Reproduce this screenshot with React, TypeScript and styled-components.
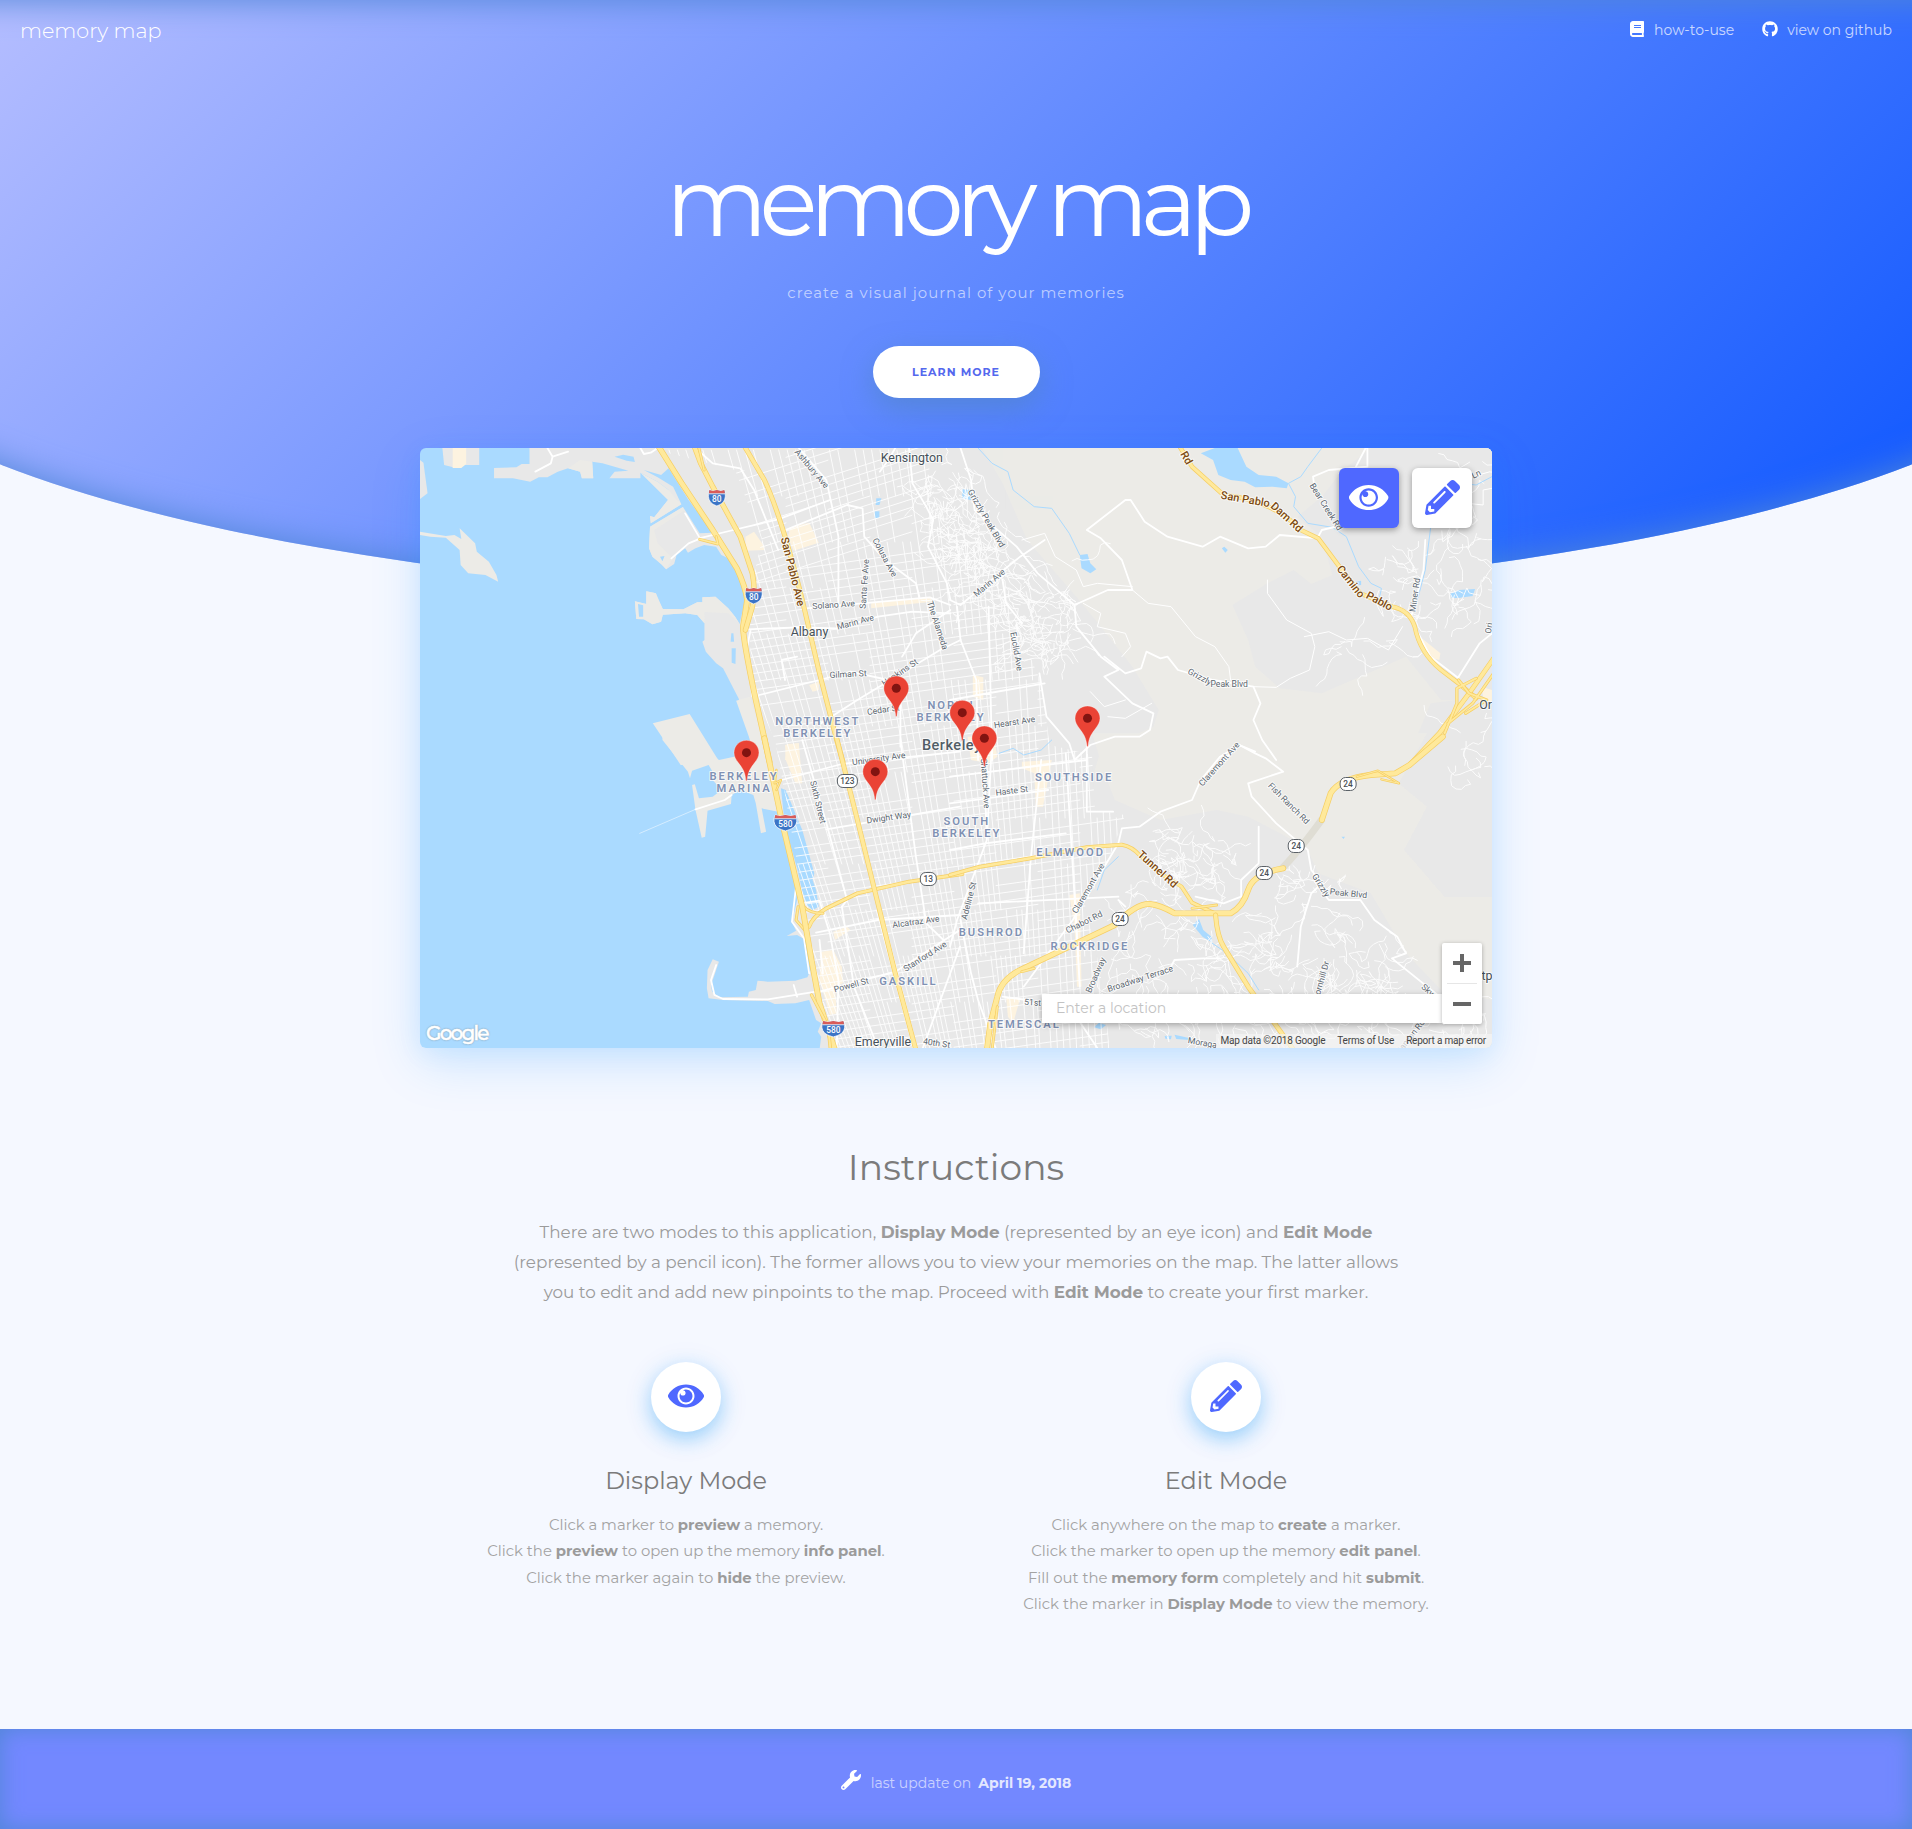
import React from "react";
import styled, { createGlobalStyle, css } from "styled-components";
import { FaBook, FaGithub, FaPencilAlt, FaWrench } from "react-icons/fa";

const GlobalStyle = createGlobalStyle`
  *, *::before, *::after { box-sizing: border-box; }
  body {
    margin: 0;
    background: #f5f8ff;
    font-family: "Montserrat", Inter, "Open Sans", sans-serif;
    font-weight: 400;
  }
  h1, h2, h3, p { margin: 0; font-weight: 400; }
  a { color: inherit; text-decoration: none; }
`;

/* ---------- layout ---------- */

const Page = styled.div`
  position: relative;
  display: flex;
  flex-direction: column;
  min-height: 1829px;
  overflow: hidden;
`;

const HeroBackdrop = styled.div`
  position: absolute;
  top: 0;
  left: -10%;
  width: 120%;
  height: 598px;
  border-radius: 0 0 50% 50%;
  background: linear-gradient(135deg, #c1c5ff, #004eff);
  box-shadow: inset 0 0 34px rgb(80, 134, 215);
`;

const Nav = styled.nav`
  position: relative;
  display: flex;
  justify-content: space-between;
  align-items: flex-start;
  height: 60px;
  padding: 18px 20px 0;
  color: #fff;
`;

const Brand = styled.a`
  font-size: 20.7px;
  font-weight: 300;
  line-height: 26px;
`;

const NavLinks = styled.div`
  display: flex;
  gap: 28px;
  padding-top: 2px;
`;

const NavLink = styled.a`
  display: flex;
  gap: 9px;
  font-size: 14px;
  line-height: 20px;
  svg { margin-top: 1px; font-size: 16px; }
  span { opacity: 0.72; }
`;

const Hero = styled.header`
  position: relative;
  display: flex;
  flex-direction: column;
  align-items: center;
  height: 388px;
  padding-top: 92px;
`;

const Title = styled.h1`
  color: #fff;
  font-size: 96px;
  line-height: 100px;
  letter-spacing: -8px;
`;

const Tagline = styled.p`
  margin-top: 31px;
  color: rgba(255, 255, 255, 0.6);
  font-size: 14.95px;
  line-height: 20px;
  letter-spacing: 1px;
`;

const LearnMore = styled.a`
  display: flex;
  align-items: center;
  justify-content: center;
  width: 167px;
  height: 52px;
  margin-top: 43px;
  border-radius: 26px;
  background: #fff;
  box-shadow: 0 10px 30px rgba(80, 134, 190, 0.6);
  color: #5468ee;
  font-size: 11px;
  font-weight: 700;
  letter-spacing: 1px;
`;

const MapCard = styled.section`
  position: relative;
  width: 1072px;
  height: 600px;
  margin: 0 auto;
  border-radius: 6px;
  box-shadow: 0 15px 50px rgba(0, 135, 255, 0.17), 0 5px 25px rgba(0, 150, 255, 0.08);
`;

const MapCanvas = styled.svg`
  display: block;
  width: 1072px;
  height: 600px;
  border-radius: 6px;
`;

const ModeButtons = styled.div`
  position: absolute;
  top: 20px;
  right: 20px;
  display: flex;
  gap: 13px;
`;

const ModeButton = styled.button<{ $active?: boolean }>`
  display: flex;
  align-items: center;
  justify-content: center;
  width: 60px;
  height: 60px;
  padding: 0;
  border: 0;
  border-radius: 6px;
  background: ${(p) => (p.$active ? "#4f68ff" : "#fff")};
  color: ${(p) => (p.$active ? "#fff" : "#4f68ff")};
  box-shadow: 0 2px 6px rgba(0, 0, 0, 0.35);
  font-size: 35px;
  svg { margin-top: -2px; }
`;

const MapTools = styled.div`
  position: absolute;
  right: 10px;
  bottom: 24px;
  display: flex;
  align-items: flex-end;
`;

const SearchInput = styled.input`
  width: 400px;
  height: 29px;
  margin-bottom: 1px;
  padding: 0 14px 2px;
  border: 0;
  background: #fff;
  box-shadow: 0 2px 6px rgba(0, 0, 0, 0.3);
  font: 400 14px "Montserrat", Inter, sans-serif;
  &::placeholder { color: #c3c3c3; opacity: 1; }
`;

const ZoomControl = styled.div`
  display: flex;
  flex-direction: column;
  align-items: center;
  width: 40px;
  height: 81px;
  border-radius: 2px;
  background: #fff;
  box-shadow: 0 1px 4px rgba(0, 0, 0, 0.3);
`;

const ZoomButton = styled.button`
  display: flex;
  align-items: center;
  justify-content: center;
  width: 40px;
  height: 40px;
  padding: 0;
  border: 0;
  background: none;
  color: #666;
`;

const ZoomDivider = styled.div`
  width: 30px;
  height: 1px;
  background: #e6e6e6;
`;

const GoogleMark = styled.div`
  position: absolute;
  left: 6px;
  bottom: 2px;
  color: #fff;
  font: 500 20px/26px "Montserrat", Inter, sans-serif;
  letter-spacing: -1.8px;
  -webkit-text-stroke: 0.5px #fff;
  text-shadow: 0 0 2px #8ba5b8, 0 0 2px #8ba5b8;
`;

const Attribution = styled.div`
  position: absolute;
  right: 0;
  bottom: 0;
  display: flex;
  gap: 12px;
  height: 14px;
  padding: 0 6px 0 5px;
  border-bottom-right-radius: 6px;
  background: rgba(245, 245, 245, 0.7);
  color: #444;
  font: 400 10px/14px Roboto, sans-serif;
  letter-spacing: -0.2px;
`;

const Instructions = styled.section`
  display: flex;
  flex-direction: column;
  align-items: center;
  padding-top: 97px;
  text-align: center;
`;

const Heading = styled.h2`
  color: #7b7b7b;
  font-size: 36px;
  line-height: 44px;
  letter-spacing: 0.1px;
`;

const Intro = styled.p`
  width: 900px;
  margin-top: 28px;
  color: #9b9b9b;
  font-size: 16.82px;
  line-height: 30px;
  strong { font-weight: 700; }
`;

const Modes = styled.div`
  display: grid;
  grid-template-columns: 540px 540px;
  margin-top: 55px;
`;

const Mode = styled.article`
  display: flex;
  flex-direction: column;
  align-items: center;
`;

const ModeIcon = styled.div`
  display: flex;
  align-items: center;
  justify-content: center;
  width: 70px;
  height: 70px;
  border-radius: 50%;
  background: #fff;
  color: #4f68ff;
  box-shadow: 0 7px 20px rgba(0, 143, 240, 0.34), 0 5px 35px rgba(0, 123, 255, 0.08);
  font-size: 32px;
  svg { margin-top: -2px; }
`;

const ModeTitle = styled.h3`
  margin-top: 34px;
  color: #7b7b7b;
  font-size: 23.9px;
  line-height: 30px;
`;

const ModeText = styled.p`
  margin-top: 16px;
  color: #a3a3a3;
  font-size: 14.87px;
  line-height: 26.4px;
  white-space: pre-line;
  strong { font-weight: 700; color: #9b9b9b; }
`;

const Footer = styled.footer`
  display: flex;
  justify-content: center;
  align-items: flex-start;
  height: 100px;
  margin-top: auto;
  padding-top: 41px;
  background: #7388ff;
  box-shadow: inset 0 0 22px rgb(80, 134, 215);
  color: #fff;
  font-size: 14px;
  line-height: 20px;
  svg { font-size: 20px; margin-right: 10px; }
  span { margin: 3px 7px 0 0; opacity: 0.62; }
  strong { margin-top: 3px; font-weight: 700; opacity: 0.8; }
`;

/* ---------- icons ---------- */

const EyeIcon = () => (
  <svg viewBox="0 0 576 512" width="1.125em" height="1em" fill="currentColor">
    <path d="M569.354 231.631C512.969 135.949 407.81 72 288 72 168.14 72 63.004 135.994 6.646 231.631a47.999 47.999 0 0 0 0 48.739C63.031 376.051 168.19 440 288 440c119.86 0 224.996-63.994 281.354-159.631a47.997 47.997 0 0 0 0-48.738zM288 392c-75.162 0-136-60.827-136-136 0-75.162 60.826-136 136-136 75.162 0 136 60.826 136 136 0 75.162-60.826 136-136 136zm104-136c0 57.438-46.562 104-104 104s-104-46.562-104-104c0-17.708 4.431-34.379 12.236-48.973l-.001.032c0 23.651 19.173 42.823 42.824 42.823s42.824-19.173 42.824-42.823c0-23.651-19.173-42.824-42.824-42.824l-.032.001C253.621 156.431 270.292 152 288 152c57.438 0 104 46.562 104 104z" />
  </svg>
);

const PlusIcon = () => (
  <svg width="18" height="18" fill="currentColor">
    <path d="M7 0h4v7h7v4h-7v7H7v-7H0V7h7z" />
  </svg>
);

const MinusIcon = () => (
  <svg width="18" height="18" fill="currentColor">
    <path d="M0 7h18v4H0z" />
  </svg>
);

/* ---------- map drawing ---------- */

type TileName = "nw" | "ne" | "sw" | "se";
const TILES: Record<TileName, [number, number, number]> = {
  nw: [420, 440, 0.34439],
  ne: [950, 440, 0.35077],
  sw: [420, 740, 0.34439],
  se: [950, 740, 0.35077],
};
const YS = 1 / 3;

const place = (tile: TileName, x: number, y: number): [number, number] => {
  const [ox, oy, sx] = TILES[tile];
  return [ox + x * sx, oy + y * YS];
};

const Tile = ({ name, children }: { name: TileName; children: React.ReactNode }) => {
  const [ox, oy, sx] = TILES[name];
  return <g transform={`translate(${ox} ${oy}) scale(${sx} ${YS})`}>{children}</g>;
};

const line = css`
  fill: none;
  stroke-linejoin: round;
  stroke-linecap: round;
  vector-effect: non-scaling-stroke;
`;
const Water = styled.path`fill: #aadaff;`;
const Park = styled.path`fill: #ecebe7;`;
const Town = styled.path`fill: #e8e8e8;`;
const Shop = styled.path`fill: #fdf3e0;`;
const Creek = styled.path`${line} stroke: #aadaff; stroke-width: 1px;`;
const Lane = styled.path`${line} stroke: #fff; stroke-width: 1px;`;
const Street = styled.path<{ $w?: number }>`${line} stroke: #fff; stroke-width: ${(p) => p.$w ?? 1.8}px;`;
const Casing = styled.path<{ $w: number }>`${line} stroke: #f6cf65; stroke-width: ${(p) => p.$w + 1.4}px;`;
const Fill = styled.path<{ $w: number }>`${line} stroke: #ffe99b; stroke-width: ${(p) => p.$w}px;`;
const Tunnel = styled.path`${line} stroke: #dfddd4; stroke-width: 7px; stroke-linecap: butt;`;

const Highway = ({ d, w = 4 }: { d: string; w?: number }) => (
  <>
    <Casing d={d} $w={w} />
    <Fill d={d} $w={w} />
  </>
);

/* small deterministic generator so the street texture is stable */
const seeded = (seed: number) => () => {
  seed = (seed * 1664525 + 1013904223) % 4294967296;
  return seed / 4294967296;
};

/* flat-land street grid, leaning with San Pablo Ave in the west */
const cityGrid = () => {
  const r = seeded(7);
  let d = "";
  const lean = (x: number) => Math.max(0.05, 0.26 - (x - 837) * 0.0011);
  for (let x = 690; x < 1120; x += 6.4) {
    for (let y = 450; y < 1048; y += 46) {
      if (r() < 0.24) continue;
      const k = lean(x);
      const a = x + (y - 740) * k;
      d += `M${a.toFixed(1)} ${y}L${(a + 46 * k).toFixed(1)} ${y + 46}`;
    }
  }
  for (let y = 440; y < 1130; y += 8.2) {
    for (let x = 660; x < 1130; x += 42) {
      if (r() < 0.22) continue;
      const s = y < 560 ? 0.32 : 0.14;
      const b = y - (x - 840) * s;
      d += `M${x} ${b.toFixed(1)}L${x + 42} ${(b - 42 * s).toFixed(1)}`;
    }
  }
  return d;
};

/* winding hill lanes inside a box */
const hillLanes = (x0: number, y0: number, x1: number, y1: number, count: number, seed: number, heading: number) => {
  const r = seeded(seed);
  let d = "";
  for (let i = 0; i < count; i++) {
    let x = x0 + r() * (x1 - x0);
    let y = y0 + r() * (y1 - y0);
    let a = heading + (r() - 0.5) * 1.4;
    d += `M${x.toFixed(1)} ${y.toFixed(1)}`;
    for (let s = 0; s < 9; s++) {
      a += (r() - 0.5) * 1.9;
      if (r() < 0.12) a += 2.4;
      x += Math.cos(a) * 5.5;
      y += Math.sin(a) * 5.5;
      d += `L${x.toFixed(1)} ${y.toFixed(1)}`;
    }
  }
  return d;
};

const GRID = cityGrid();
const HILLS = [
  hillLanes(925, 455, 975, 560, 45, 3, 1.1),
  hillLanes(955, 505, 1010, 600, 45, 11, 0.95),
  hillLanes(995, 560, 1075, 660, 60, 19, 0.95),
  hillLanes(1150, 825, 1225, 890, 26, 21, 1.2),
  hillLanes(1110, 850, 1200, 1040, 48, 13, 0.5),
  hillLanes(1200, 930, 1390, 1040, 100, 17, 1.1),
  hillLanes(1270, 860, 1340, 930, 16, 23, 1.4),
  hillLanes(1360, 545, 1480, 610, 22, 29, 0.7),
  hillLanes(1330, 640, 1390, 655, 7, 31, 0.2),
  hillLanes(1435, 455, 1490, 600, 20, 37, 1.3),
  hillLanes(1460, 720, 1490, 780, 8, 41, 1.0),
  hillLanes(1400, 985, 1490, 1045, 16, 43, 0.8),
];

type Kind = "street" | "area" | "town" | "city" | "road";
const MapText = styled.text<{ $kind: Kind }>`
  font-family: Roboto, sans-serif;
  text-anchor: middle;
  dominant-baseline: central;
  paint-order: stroke;
  stroke: rgba(255, 255, 255, 0.75);
  stroke-width: 2px;
  stroke-linejoin: round;
  ${(p) =>
    ({
      street: "font-size: 8.6px; fill: #5c6770;",
      area: "font-size: 11.2px; font-weight: 600; letter-spacing: 2px; fill: #8091b3;",
      town: "font-size: 12.4px; fill: #46515a;",
      city: "font-size: 14.5px; font-weight: 500; letter-spacing: 0.5px; fill: #525d66;",
      road: "font-size: 11px; font-weight: 500; fill: #7c4a12;",
    })[p.$kind]}
`;

const LABELS: [TileName, number, number, string, Kind, number?][] = [
  ["nw", 1428, 52, "Kensington", "town"],
  ["nw", 1131, 575, "Albany", "town"],
  ["sw", 1344, 904, "Emeryville", "town"],
  ["ne", 1527, 792, "Or", "town"],
  ["nw", 1155, 844, "NORTHWEST", "area"],
  ["nw", 1155, 880, "BERKELEY", "area"],
  ["ne", 3, 796, "NORTH", "area"],
  ["ne", 3, 832, "BERKELEY", "area"],
  ["sw", 941, 108, "BERKELEY", "area"],
  ["sw", 941, 145, "MARINA", "area"],
  ["se", 354, 111, "SOUTHSIDE", "area"],
  ["se", 48, 243, "SOUTH", "area"],
  ["se", 48, 279, "BERKELEY", "area"],
  ["se", 344, 336, "ELMWOOD", "area"],
  ["se", 118, 577, "BUSHROD", "area"],
  ["se", 399, 619, "ROCKRIDGE", "area"],
  ["sw", 1418, 724, "GASKILL", "area"],
  ["se", 212, 853, "TEMESCAL", "area"],
  ["ne", 5, 916, "Berkeley", "city"],
  ["nw", 1138, 86, "Ashbury Ave", "street", 50],
  ["nw", 1350, 352, "Colusa Ave", "street", 62],
  ["nw", 1290, 432, "Santa Fe Ave", "street", -86],
  ["nw", 1201, 494, "Solano Ave", "street", -4],
  ["nw", 1264, 546, "Marin Ave", "street", -15],
  ["nw", 1503, 556, "The Alameda", "street", 72],
  ["nw", 1243, 702, "Gilman St", "street", -3],
  ["nw", 1393, 697, "Hopkins St", "street", -34],
  ["nw", 1345, 809, "Cedar St", "street", -8],
  ["sw", 1332, 56, "University Ave", "street", -8],
  ["sw", 1156, 186, "Sixth Street", "street", 76],
  ["sw", 1361, 232, "Dwight Way", "street", -8],
  ["sw", 1440, 545, "Alcatraz Ave", "street", -8],
  ["sw", 1466, 649, "Stanford Ave", "street", -32],
  ["sw", 1252, 735, "Powell St", "street", -15],
  ["sw", 1500, 909, "40th St", "street", 8],
  ["se", 53, 482, "Adeline St", "street", -76],
  ["se", 101, 130, "Shattuck Ave", "street", 86],
  ["se", 176, 152, "Haste St", "street", -7],
  ["se", 394, 445, "Claremont Ave", "street", -60],
  ["se", 382, 546, "Chabot Rd", "street", -26],
  ["se", 415, 705, "Broadway", "street", -66],
  ["se", 542, 716, "Broadway Terrace", "street", -18],
  ["se", 250, 788, "51st St", "street", 4],
  ["se", 767, 72, "Claremont Ave", "street", -48],
  ["se", 966, 190, "Fish Ranch Rd", "street", 45],
  ["se", 1058, 436, "Grizzly", "street", 58],
  ["se", 1136, 460, "Peak Blvd", "street", 6],
  ["se", 1056, 728, "Thornhill Dr", "street", -74],
  ["se", 1362, 750, "Sky", "street", 42],
  ["se", 1312, 890, "Canyon Rd", "street", -52],
  ["se", 720, 908, "Moraga", "street", 10],
  ["ne", 104, 235, "Grizzly Peak Blvd", "street", 60],
  ["ne", 112, 428, "Marin Ave", "street", -40],
  ["ne", 190, 634, "Euclid Ave", "street", 80],
  ["ne", 184, 846, "Hearst Ave", "street", -9],
  ["ne", 712, 710, "Grizzly", "street", 28],
  ["ne", 796, 732, "Peak Blvd", "street", 0],
  ["ne", 1072, 200, "Bear Creek Rd", "street", 58],
  ["ne", 1325, 465, "Miner Rd", "street", -82],
  ["ne", 1500, 102, "Ln", "street", -25],
  ["ne", 1536, 564, "Ori", "street", -80],
  ["nw", 1082, 395, "San Pablo Ave", "road", 76],
  ["ne", 674, 54, "Rd", "road", 60],
  ["ne", 842, 178, "San Pablo", "road", 10],
  ["ne", 960, 232, "Dam Rd", "road", 42],
  ["ne", 1142, 425, "Camino", "road", 52],
  ["ne", 1224, 484, "Pablo", "road", 28],
  ["se", 592, 388, "Tunnel Rd", "road", 42],
  ["se", 1522, 707, "stp", "town"],
];

const ShieldText = styled.text<{ $light?: boolean }>`
  font: 500 8.4px Roboto, sans-serif;
  text-anchor: middle;
  fill: ${(p) => (p.$light ? "#fff" : "#4a5056")};
`;

const Interstate = ({ at, n }: { at: [number, number]; n: string }) => {
  const wide = n.length > 2 ? 1.35 : 1;
  return (
    <g transform={`translate(${at[0]} ${at[1]})`}>
      <g transform={`scale(${wide} 1)`}>
        <path d="M-7.5-8 -4-7 0-8 4-7 7.5-8C9-4 9 1 6 4.500 4 6.500 2 7 0 8-2 7-4 6.500-6 4.500-9 1-9-4-7.500-8z" fill="#3b74c6" stroke="#fff" strokeWidth=".7" />
        <path d="M-7.500-8-4-7 0-8 4-7 7.500-8 8-4.600H-8z" fill="#d95c58" />
        <path d="M-8.200-4.200H8.200" stroke="#fff" strokeWidth=".8" />
      </g>
      <ShieldText $light y="4">{n}</ShieldText>
    </g>
  );
};

const StateRoute = ({ at, n }: { at: [number, number]; n: string }) => {
  const w = n.length > 2 ? 20 : 16;
  return (
    <g transform={`translate(${at[0]} ${at[1]})`}>
      <rect x={-w / 2} y="-6.500" width={w} height="13" rx="5.500" fill="#fff" stroke="#5b6167" strokeWidth="1" />
      <ShieldText y="3">{n}</ShieldText>
    </g>
  );
};

const PINS: [TileName, number, number][] = [
  ["nw", 1383, 831],
  ["ne", 392, 921],
  ["ne", 35, 904],
  ["sw", 948, 124],
  ["se", 98, 81],
  ["sw", 1322, 181],
];

const Pin = ({ at }: { at: [number, number] }) => (
  <g transform={`translate(${at[0] - 13} ${at[1] - 41.500})`}>
    <path d="M13 .500C6 .500.500 6 .500 12.800c0 4 1.800 6.600 4.400 10.200C8.500 28 11.800 31.500 12.400 41h1.200c.6-9.500 3.900-13 7.500-18 2.600-3.600 4.400-6.200 4.400-10.200C25.500 6 20 .500 13 .500z" fill="#ea4335" stroke="#fff" strokeOpacity=".6" strokeWidth=".6" />
    <circle cx="13" cy="12.800" r="4.500" fill="#811411" />
  </g>
);

const BayMap = () => (
  <MapCanvas viewBox="420 448 1072 600">
    <defs>
      <clipPath id="flats">
        <path d="M648 448 L925 448 L940 520 L990 560 L1040 680 L1050 745 L1092 755 L1095 810 L1125 815 L1105 870 L1085 905 L1100 970 L1110 1048 L838 1048 L815 985 L800 880 L786 800 L775 740 L752 690 L748 600 L762 540 L735 470 Z" />
      </clipPath>
    </defs>
    <rect x="420" y="448" width="1072" height="600" fill="#aadaff" />
    <rect x="940" y="448" width="552" height="600" fill="#e8e8e8" />

    {/* land */}
    <Tile name="nw">
      <Town d="M215 84 280 82 295 72 318 72 318 0H1700V1100H1010L975 960 960 900 925 775 905 735 880 685 860 670 830 635 820 605 826 600 826 550 805 525 770 520 705 524 700 545 675 553 650 538 628 537 624 484 657 492V454L685 460 690 478 705 507 765 508 805 487H820V472L858 470 895 505 915 530 928 552 942 490 942 450 925 405 895 355 875 345 860 320 825 315 800 325 778 338 770 325 745 345 738 372 715 388 700 372 675 350 665 325 668 260 765 200 760 192 670 250 668 228 680 232 720 180 722 150 690 125 640 98V115H550L565 95 605 92 530 70 500 65 503 115H470L465 95 430 85 400 95 370 112 345 112 320 125 270 115 215 115Z" />
      <Park d="M624 484 657 492V454L685 460 705 507 765 508 805 487H820V472L858 470 895 505 915 530 928 552 895 520 826 516V550L805 525 770 520 705 524 700 545 675 553 650 538 628 537ZM430 85 465 60 500 65 503 115H470L465 95ZM668 260 765 200 770 210 680 270 690 310 735 355 715 388 700 372 675 350 665 325ZM640 98 690 125 722 150 745 180 760 192 670 250 668 228 680 232 720 180Z" />
      <Water d="M633 492 648 496V530L636 530ZM722 85 780 180 850 278 812 280 760 195 735 140 690 112 650 90 700 105ZM565 50 590 44 620 50 624 66 600 62ZM1325 175 1340 175 1334 195 1323 195ZM1320 214H1334V234H1320ZM904 580 910 580 912 605 902 605ZM905 625 917 625 916 672 905 668ZM697 350 710 348 704 364Z" />
      <Town d="M65 24H172V75H130L105 84 70 75Z" />
      <Shop d="M95 24H134V72L120 84H95Z" />
      <Town d="M0 60 10 68 22 160 0 177Z" />
      <Park d="M0 275 75 288 100 285 120 297 115 265 160 310 165 335 200 365 222 405 227 425 190 405 140 400 118 375 115 330 75 293 30 290 0 285ZM676 850 783 822 875 975 757 975Z" />
      <Park d="M918 782 958 770 1015 960H975L955 890Z" />
    </Tile>
    <Tile name="sw">
      <Park d="M704 -10 790 -10 868 60 912 50 1010 38 1050 120 1030 190 1040 215 992 205 1005 275 990 280 975 190 968 165 930 150 905 165 903 192 835 212 828 290 818 293 800 210 790 135 798 133 810 175 850 170 875 150 850 120 848 92 838 75 790 92 784 115 778 95 704 0Z" />
      <Town d="M1000 -20 1040 215 1055 270 1090 430 1095 480 1080 545 1092 572 1065 588 1095 585 1120 600 1135 690 1125 712 1090 722 1010 725 980 722 975 750 955 755 952 770 870 772 848 755 845 735 868 665 850 658 835 690 833 745 838 775 880 780 1010 783 1030 792 1090 790 1130 780 1150 840 1165 850 1155 875 1165 890 1160 930H1700V-20Z" />
      <Water d="M1048 145 1062 150 1110 270 1145 400 1140 420 1150 450 1158 500 1140 510 1118 490 1095 385 1060 260Z" />
      <Shop d="M1060 15 1100 10 1110 130 1090 130 1062 60ZM1165 635 1200 630 1225 680 1228 730 1205 740 1210 820 1190 825 1160 720ZM1200 575 1240 560 1250 570 1205 600Z" />
    </Tile>
    <Tile name="ne">
      <Park d="M78 0H1568V1000H410L430 930 580 860 595 810 520 680 430 560 360 470 220 300 150 130Z" />
      <Town d="M1230 0 H1600V780H1400L1300 650 1060 760 940 745 870 680 850 600 805 495 905 430 980 390 1030 432 1090 405 1060 290 990 230 1060 170 1120 90ZM1370 790 1600 760V1000H1380L1335 880Z" />
      <Water d="M755 24H820L845 80 880 105 930 110 965 130 960 145 920 140 870 142 840 125 800 120 765 105 750 60 715 40ZM35 148 66 150 60 180 35 176ZM370 345 392 342 400 370 417 388 400 400 375 385ZM775 325 782 320 792 330 785 338ZM1425 462 1450 450 1497 447 1490 468 1450 474 1430 474ZM1158 425 1172 422 1172 435 1158 436Z" />
      <Shop d="M1345 595 1398 640 1395 660 1375 655 1345 615ZM65 705 95 712 95 780 65 770ZM1515 740 1545 750V790L1520 770Z" />
    </Tile>
    <Tile name="se">
      <Park d="M405 -20 440 100 470 180 600 240 760 210 850 230 960 290 1020 330 1050 400 1200 460 1300 640 1400 750 1600 790V470H1410L1295 330 1360 200 1280 130 1360 -20Z" />
      <Town d="M1360 -20H1600V470H1410L1295 330 1360 200 1280 130Z" />
      <Water d="M692 555 710 537 722 570 745 590 748 608 720 590ZM410 862 425 848 445 855 430 868ZM612 888 632 887 630 898 614 896ZM640 884 685 895 682 900 645 897ZM1116 290 1126 290 1122 297Z" />
      <Shop d="M50 -10H125L135 50 110 70 60 60ZM205 65 290 60 265 200 245 200 240 100 205 85ZM340 465 370 460 375 740H362L355 560ZM160 770 200 775 180 850 165 830Z" />
    </Tile>
    <Tile name="nw">
      <Shop d="M945 290 970 275 1000 320V330L945 332ZM1075 262 1130 248 1158 308 1085 332 1068 290ZM1310 490 1485 470 1485 485 1310 505ZM1130 735 1158 725 1158 750 1140 755ZM1065 912 1100 910 1100 960H1060Z" />
    </Tile>

    {/* minor streets */}
    <g clipPath="url(#flats)">
      <Lane d={GRID} opacity=".85" />
    </g>
    {HILLS.map((d, i) => (
      <Lane key={i} d={d} opacity=".9" />
    ))}

    {/* creeks */}
    <Tile name="ne">
      <Creek d="M80 24 120 70 165 95 180 150 240 200 290 205 340 280 370 345M1060 24 1020 80 1000 110 965 130 985 170 980 200 1020 250 1090 262 1130 290 1165 380 1200 430 1230 445 1225 470M1370 265 1355 390 1330 490M1545 110 1500 135 1460 130" />
    </Tile>
    <Tile name="se">
      <Creek d="M140 40 180 25 210 45 260 30 290 0M748 610 790 640 850 700 880 750M480 350 440 390 420 450" />
    </Tile>

    {/* collector streets */}
    <Tile name="nw">
      <Street d="M640 24 650 42 670 38 690 24M800 24 850 70 930 85 970 150 1040 330M810 295 910 270 1040 238 1190 180M1050 275 1240 195 1285 205 1290 290M1100 24 1180 120 1215 290 1215 490M950 568 1100 562 1210 565 1330 530 1430 515 1540 520M985 765 1160 720 1250 695 1360 720M1165 850 1270 780 1510 630 1570 600M1420 24 1430 130 1470 200 1490 240 1475 320 1530 430 1540 480M1120 505 1480 472 1540 495M1290 290 1350 360 1440 430 1450 470M960 570 950 620 965 770M770 220 810 290M730 355 780 310 815 295M1395 740 1395 920M1380 24 1360 60 1335 95M335 95 380 70 385 50 370 24M385 50 430 35M1095 650 1050 660 1060 720M1400 650 1440 580 1540 510" />
    </Tile>
    <Tile name="sw">
      <Street d="M1050 120 1225 72 1568 35M1110 0 1180 250 1240 480M1180 268 1568 200M1395 0 1440 350 1470 550 1520 600M1160 755 1380 695 1568 570M1092 440 1080 545 1115 595 1130 700M1240 480 1225 500 1260 740 1330 924M1460 924 1568 620M1105 490 1160 482 1190 580 1215 720 1210 924M1150 578 1330 540 1568 525M1160 600 1170 700M800 208 885 180 905 165M860 675 845 720 855 765 880 777 1010 778 1150 755M1085 735 1095 770" />
      <Lane d="M638 280 800 208" opacity=".5" />
    </Tile>
    <Tile name="ne">
      <Street d="M0 480 30 495 200 350 270 300M30 24 60 120 70 210 190 320 250 400 355 495 450 450 520 450 490 360 430 295 390 270 500 180 515 180 555 245 620 290 720 320 770 290 850 325 900 320 940 285 1050 295M355 495 360 560 430 650 480 690 440 710 520 790 580 820 570 870 540 890 470 890 400 915 355 960M440 650 500 700 545 685 560 635 600 655 620 650 650 690 750 720 865 740 885 790 865 840 890 900 930 960M1050 290 1060 270 1120 255M1040 150 1035 110 1080 90 1190 80 1190 24M1110 100 1150 95 1185 24M1355 300 1350 390 1315 530M1450 710 1510 610 1545 580M1310 530 1370 650 1450 715M20 500 30 600 75 720 80 960M110 500 120 960M150 420 160 490 205 550M0 780 270 730M255 700 275 830 340 910 355 960M780 960 825 915 870 935" />
      <Lane d="M520 450 565 490 630 500 700 590 755 620 795 680 800 720M865 740 930 742 970 715 1025 690 1040 620 1030 580 960 540 905 460V420M1010 590 1080 575 1130 600 1190 595 1250 630 1290 560M1540 95 1490 110M1545 145 1520 150 1520 195 1475 190M400 755 440 800 500 780M450 830 500 835 575 790M205 300 270 280 300 350 360 390 380 440 420 430 520 440M380 490 430 520 420 560 500 580 515 620 490 650" />
    </Tile>
    <Tile name="se">
      <Street d="M0 110 390 60M0 190 280 150M95 0 105 300 20 540 0 620M120 0 105 300M30 540 60 700 80 780 130 924M390 0 390 215 465 215M490 265 540 260 600 215 690 180 715 120 770 50 825 15 870 40 900 55 950 95 850 130 860 170 930 250 1020 330 1030 390 1060 430 1030 460 1000 560 990 680M490 265 480 310 350 540 210 740M1050 440 1080 480 1170 480 1210 540 1275 590 1300 640 1260 655 1390 765M330 40 350 380 370 740M260 60 230 360 210 640M150 770 220 780M80 490 480 470M360 830 420 924M700 470 780 490 830 470 830 420 880 370 880 260M620 700 640 660 720 655 770 655M480 480 500 500M0 330 100 310 330 280" />
    </Tile>

    {/* tunnel and highways */}
    <Tile name="se">
      <Tunnel d="M945 387Q990 340 1062 236" />
    </Tile>
    <Tile name="nw">
      <Highway d="M690 15 760 130 850 270 920 385Q945 440 950 480L938 560Q938 600 975 780L1015 965" w={4.5} />
      <Highway d="M795 15 815 70 850 140 930 290 965 400Q975 450 965 500L945 570" w={4} />
      <Highway d="M940 15 1000 120Q1050 230 1110 480L1160 700 1210 900 1228 965" w={3.600} />
      <Highway d="M812 298 865 312 860 290" w={1.500} />
      <Highway d="M810 24 825 90" w={1.500} />
    </Tile>
    <Tile name="sw">
      <Highway d="M1130 560Q1140 530 1180 505L1270 460 1420 425 1575 402" w={2.600} />
      <Highway d="M1115 500Q1130 520 1170 520M1098 500 1092 540 1125 580" w={1.600} />
      <Highway d="M1000 -5 1050 240 1110 500 1135 650 1160 790 1205 930" w={4.500} />
      <Highway d="M1137 765 1185 860 1192 930" w={2} />
      <Highway d="M1035 90 1030 130 1048 120 1035 150" w={1} />
      <Highway d="M1210 -5 1270 240 1320 450 1380 700 1440 930" w={3.600} />
    </Tile>
    <Tile name="ne">
      <Highway d="M652 15 690 80 780 165Q920 180 1000 270L1050 295 1110 380 1170 460 1260 500Q1310 510 1325 560 1340 640 1400 690L1450 730 1500 775" w={3.200} />
      <Highway d="M1550 655 1480 760 1395 880 1310 975" w={3.600} />
      <Highway d="M1550 700 1490 790 1420 850M1500 715 1445 745 1445 790 1410 880M1450 720 1480 760 1530 780 1470 820" w={1.800} />
    </Tile>
    <Tile name="se">
      <Highway d="M0 405 85 380 230 355 390 322 490 314Q520 320 540 345L600 400 660 440 690 488 755 520" w={2.600} />
      <Highway d="M105 930 115 850 135 770Q145 720 200 690L300 640 470 555Q530 490 570 492 600 495 640 520L800 520Q835 500 850 450 865 400 950 385" w={4.500} />
      <Highway d="M120 930 135 800M205 695 240 685M690 505 760 495" w={1.500} />
      <Highway d="M1060 240 1085 160Q1110 115 1200 105L1270 100 1310 75 1405 -10" w={4.500} />
      <Highway d="M1160 110 1220 92 1280 130 1230 118" w={1} />
      <Highway d="M757 525Q762 590 780 620L850 740 980 930" w={3.600} />
    </Tile>

    {LABELS.map(([tile, x, y, text, kind, rot = 0], i) => {
      const [px, py] = place(tile, x, y);
      return (
        <MapText key={i} $kind={kind} transform={`translate(${px} ${py}) rotate(${rot})`}>
          {text}
        </MapText>
      );
    })}

    <Interstate at={place("nw", 862, 174)} n="80" />
    <Interstate at={place("nw", 969, 468)} n="80" />
    <Interstate at={place("sw", 1061, 249)} n="580" />
    <Interstate at={place("sw", 1200, 867)} n="580" />
    <StateRoute at={place("sw", 1241, 123)} n="123" />
    <StateRoute at={place("sw", 1476, 417)} n="13" />
    <StateRoute at={place("se", 485, 537)} n="24" />
    <StateRoute at={place("se", 896, 399)} n="24" />
    <StateRoute at={place("se", 987, 318)} n="24" />
    <StateRoute at={place("se", 1135, 132)} n="24" />

    {PINS.map(([tile, x, y], i) => (
      <Pin key={i} at={place(tile, x, y)} />
    ))}
  </MapCanvas>
);

/* ---------- page ---------- */

export default function App() {
  return (
    <Page>
      <GlobalStyle />
      <HeroBackdrop />
      <Nav>
        <Brand href="#">memory map</Brand>
        <NavLinks>
          <NavLink href="#"><FaBook /><span>how-to-use</span></NavLink>
          <NavLink href="#"><FaGithub /><span>view on github</span></NavLink>
        </NavLinks>
      </Nav>
      <Hero>
        <Title>memory map</Title>
        <Tagline>create a visual journal of your memories</Tagline>
        <LearnMore href="#">LEARN MORE</LearnMore>
      </Hero>

      <MapCard>
        <BayMap />
        <ModeButtons>
          <ModeButton $active><EyeIcon /></ModeButton>
          <ModeButton><FaPencilAlt /></ModeButton>
        </ModeButtons>
        <MapTools>
          <SearchInput placeholder="Enter a location" />
          <ZoomControl>
            <ZoomButton><PlusIcon /></ZoomButton>
            <ZoomDivider />
            <ZoomButton><MinusIcon /></ZoomButton>
          </ZoomControl>
        </MapTools>
        <GoogleMark>Google</GoogleMark>
        <Attribution>
          <span>Map data ©2018 Google</span>
          <span>Terms of Use</span>
          <span>Report a map error</span>
        </Attribution>
      </MapCard>

      <Instructions>
        <Heading>Instructions</Heading>
        <Intro>
          There are two modes to this application, <strong>Display Mode</strong> (represented by an eye icon) and{" "}
          <strong>Edit Mode</strong> (represented by a pencil icon). The former allows you to view your memories on
          the map. The latter allows you to edit and add new pinpoints to the map. Proceed with{" "}
          <strong>Edit Mode</strong> to create your first marker.
        </Intro>
        <Modes>
          <Mode>
            <ModeIcon><EyeIcon /></ModeIcon>
            <ModeTitle>Display Mode</ModeTitle>
            <ModeText>
              Click a marker to <strong>preview</strong> a memory.{"\n"}
              Click the <strong>preview</strong> to open up the memory <strong>info panel</strong>.{"\n"}
              Click the marker again to <strong>hide</strong> the preview.
            </ModeText>
          </Mode>
          <Mode>
            <ModeIcon><FaPencilAlt /></ModeIcon>
            <ModeTitle>Edit Mode</ModeTitle>
            <ModeText>
              Click anywhere on the map to <strong>create</strong> a marker.{"\n"}
              Click the marker to open up the memory <strong>edit panel</strong>.{"\n"}
              Fill out the <strong>memory form</strong> completely and hit <strong>submit</strong>.{"\n"}
              Click the marker in <strong>Display Mode</strong> to view the memory.
            </ModeText>
          </Mode>
        </Modes>
      </Instructions>

      <Footer>
        <FaWrench />
        <span>last update on</span>
        <strong>April 19, 2018</strong>
      </Footer>
    </Page>
  );
}
